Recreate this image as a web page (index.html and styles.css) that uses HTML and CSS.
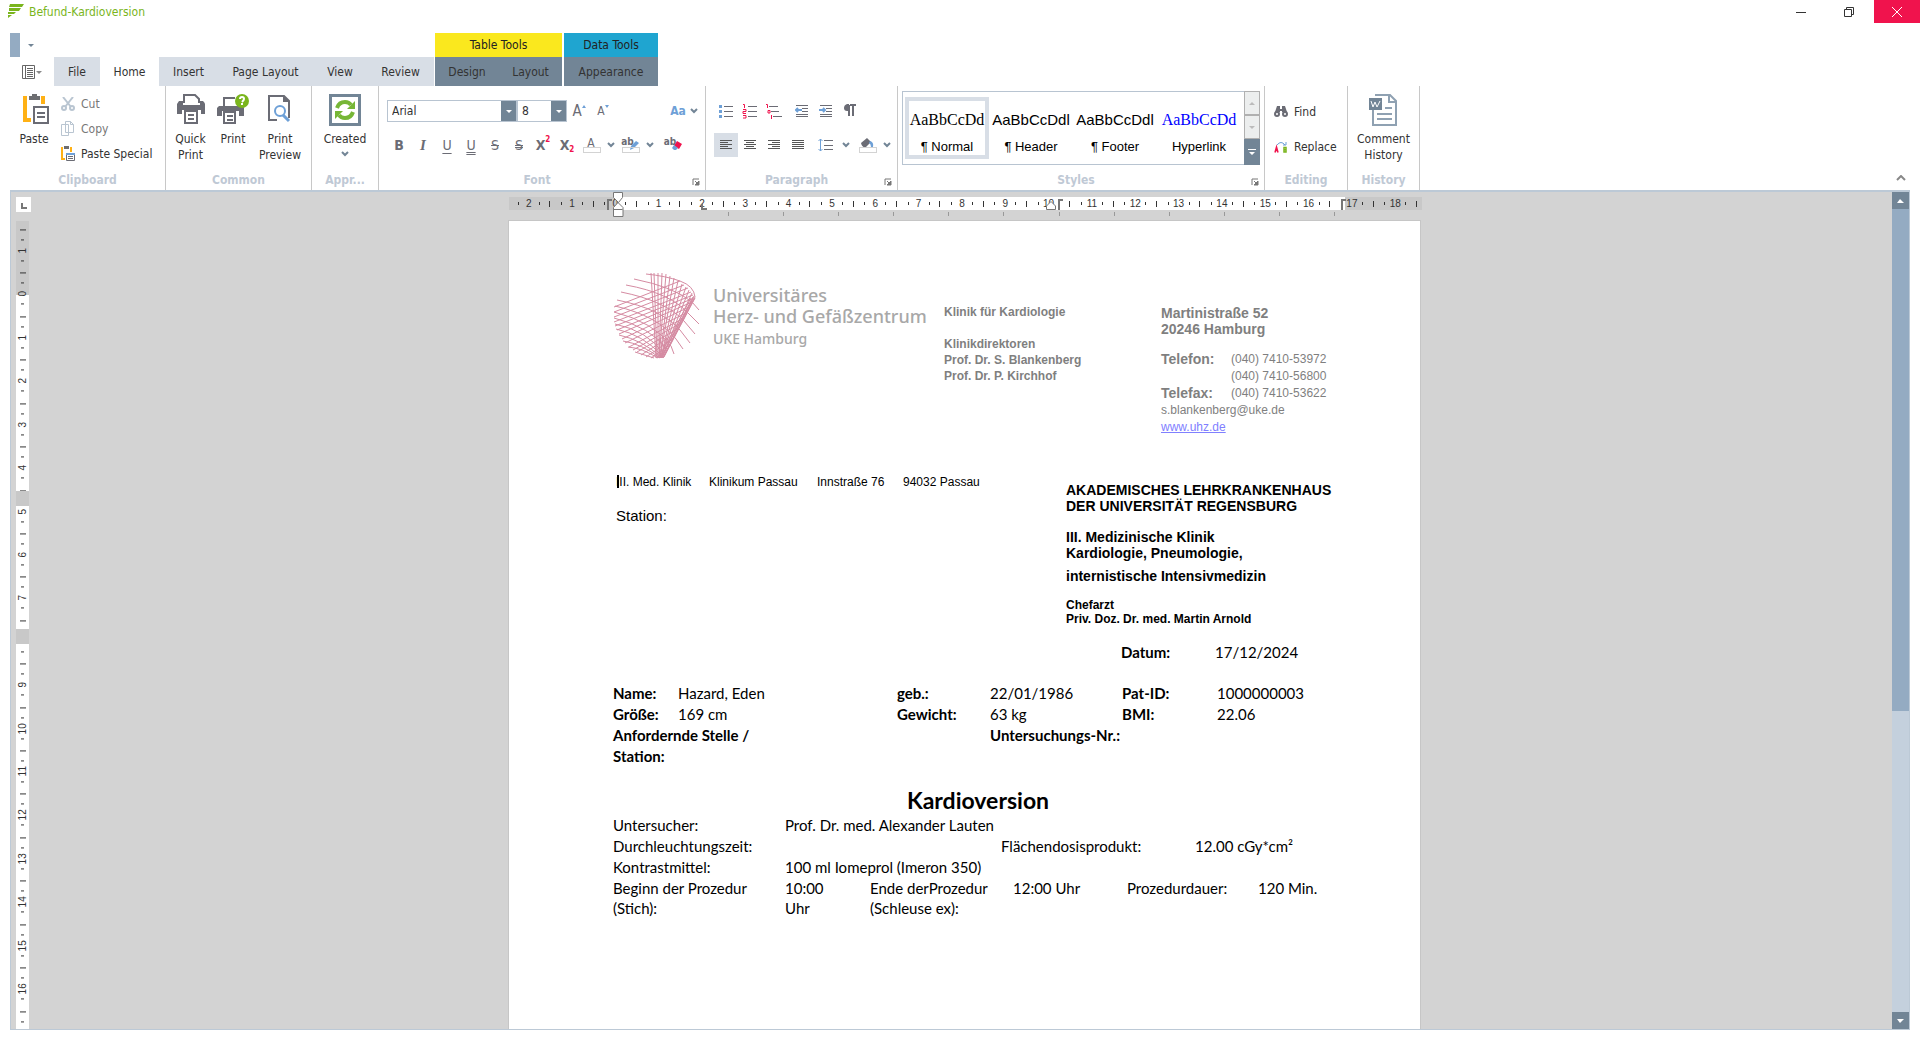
FILE: index.html
```html
<!DOCTYPE html>
<html lang="de">
<head>
<meta charset="utf-8">
<title>Befund-Kardioversion</title>
<link rel="stylesheet" href="styles.css">
</head>
<body>
<svg class="defs" aria-hidden="true">
  <symbol id="chev" viewBox="0 0 8 6"><path d="M1 1l3 3 3-3" fill="none" stroke="#728596" stroke-width="2"/></symbol>
  <symbol id="caret" viewBox="0 0 6 3"><path d="M0 0h6L3 3z" fill="currentColor"/></symbol>
  <symbol id="launch" viewBox="0 0 8 8"><path d="M1 7V1h6" fill="none" stroke="#777"/><path d="M7 3v4H3zM3 3l3 3" fill="#777" stroke="#777"/></symbol>
</svg>
<header class="titlebar">
  <svg class="app-logo" width="16" height="14" viewBox="0 0 16 14"><path d="M2 0h14l-2 3H1zM1 4h12l-2 3H1zM0 8h8l-2 2H0zM0 11h4l-4 3z" fill="#7ab51d"/></svg>
  <h1 class="title">Befund-Kardioversion</h1>
  <button class="win" aria-label="Minimize"><svg width="12" height="12"><path d="M1 6.500h10" stroke="#333"/></svg></button>
  <button class="win" aria-label="Restore"><svg width="12" height="12"><path d="M1.500 3.500h7v7h-7zM3.500 3V1.500h7v7H9" fill="none" stroke="#333"/></svg></button>
  <button class="win close" aria-label="Close"><svg width="12" height="12"><path d="M1 1l10 10M11 1L1 11" stroke="#fff"/></svg></button>
</header>

<div class="quick">
  <span class="quick-block"></span>
  <button class="quick-more" aria-label="Customize"><svg width="6" height="3"><use href="#caret"/></svg></button>
  <span class="context table-tools">Table Tools</span>
  <span class="context data-tools">Data Tools</span>
</div>

<nav class="tabs">
  <button class="menu" aria-label="Menu"><svg width="20" height="14" viewBox="0 0 20 14"><path d="M.5.5h12v13H.5zM3.500 0v14M5 3.500h6M5 5.500h6M5 7.500h6M5 9.500h6M5 11.500h6" fill="none" stroke="#666"/><path d="M14 6h6l-3 3z" fill="#888"/></svg></button>
  <button class="tab file">File</button>
  <button class="tab home">Home</button>
  <button class="tab insert">Insert</button>
  <button class="tab layout">Page Layout</button>
  <button class="tab view">View</button>
  <button class="tab review">Review</button>
  <button class="tab ctx design">Design</button>
  <button class="tab ctx tlayout">Layout</button>
  <button class="tab ctx appearance">Appearance</button>
</nav>

<section class="ribbon">
  <div class="group g-clip">
    <div class="area">
      <button class="big paste"><svg width="32" height="32" viewBox="0 0 32 32"><path d="M5 2h4v4v18h4v4H5zM23 2h4v8h-4z" fill="#ffb115"/><path d="M11 2h3V0h5v2h3v4H11z" fill="#6d6e71"/><path d="M16 13h14v16H16z" fill="#fff" stroke="#6b6c75" stroke-width="2"/><path d="M19 19h8M19 23h8" stroke="#6b6c75" stroke-width="2"/></svg>Paste</button>
      <div class="stack">
        <button class="small off"><svg width="14" height="14" viewBox="0 0 14 14" fill="none" stroke="#b9c5d1" stroke-width="2"><path d="M2 0l8 10M12 0L4 10"/><circle cx="3" cy="11" r="2"/><circle cx="11" cy="11" r="2"/></svg>Cut</button>
        <button class="small off"><svg width="14" height="16" viewBox="0 0 14 16" fill="#fff" stroke="#b9c5d1"><path d="M.5 3.500h7v11h-7zM4.500.5h5l3 3v8h-8zM9.500.5v3h3"/></svg>Copy</button>
        <button class="small"><svg width="14" height="16" viewBox="0 0 14 16"><path d="M0 1h2v11h2v2H0zM9 1h2v5H9z" fill="#ffb115"/><path d="M3 0h5v3H3z" fill="#6d6e71"/><path d="M5.500 7.500h8v7h-8z" fill="#fff" stroke="#6b6c75"/><path d="M5 7h9v2H5z" fill="#6ea0d7"/><path d="M7 10.500h5M7 12.500h5" stroke="#6b6c75"/></svg>Paste Special</button>
      </div>
    </div>
    <h2>Clipboard</h2>
  </div>
  <div class="group g-common">
    <div class="area">
      <button class="big quickp"><svg width="30" height="32" viewBox="0 0 30 32"><path d="M8 9V1h11l4 4v4" fill="none" stroke="#6b6c75" stroke-width="2"/><path d="M3 7h4v4h17V7h3q2 2 2 3v10h-4v-4H6v4H1V10z" fill="#6b6c75"/><path d="M9 17h12v12H9z" fill="#fff" stroke="#6b6c75" stroke-width="2"/><path d="M12 21h6M12 25h6" stroke="#6b6c75" stroke-width="2"/></svg>Quick<br>Print</button>
      <button class="big printb"><svg width="34" height="32" viewBox="0 0 34 32"><path d="M8 13V4h11" fill="none" stroke="#6b6c75" stroke-width="2"/><path d="M3 12h24q1 1 1 2v8h-5v-5H6v5H1v-8z" fill="#6b6c75"/><path d="M8 18h11v11H8z" fill="#fff" stroke="#6b6c75" stroke-width="2"/><path d="M11 22h6M11 26h6" stroke="#6b6c75" stroke-width="2"/><circle cx="26" cy="7" r="7" fill="#7ab51d"/><path d="M24 5q0-2 2-2t2 2q0 1-2 3M26 9v2" fill="none" stroke="#fff" stroke-width="2"/></svg>Print</button>
      <button class="big prevb"><svg width="30" height="32" viewBox="0 0 30 32"><path d="M12 26H4V2h15l5 5v17" fill="none" stroke="#6b6c75" stroke-width="2"/><path d="M18 1l7 7h-7z" fill="#6b6c75"/><circle cx="15" cy="17" r="5" fill="#fff" stroke="#6ea0d7" stroke-width="2"/><path d="M18 21l6 6" stroke="#6ea0d7" stroke-width="3"/></svg>Print<br>Preview</button>
    </div>
    <h2>Common</h2>
  </div>
  <div class="group g-appr">
    <div class="area">
      <button class="big created"><svg width="32" height="32" viewBox="0 0 32 32"><path d="M1.500 1.500h29v29h-29z" fill="#fff" stroke="#728596" stroke-width="3"/><path d="M8 14q2-6 8-6 4 0 6 3M24 18q-2 6-8 6-4 0-6-3" fill="none" stroke="#76b636" stroke-width="4"/><path d="M26 7v8h-8zM6 25v-8h8z" fill="#76b636"/></svg>Created<svg class="under" width="8" height="6"><use href="#chev"/></svg></button>
    </div>
    <h2>Appr...</h2>
  </div>
  <div class="group g-font">
    <div class="area rows">
      <div class="row">
        <label class="combo name"><select aria-label="Font"><option>Arial</option></select><span><svg width="6" height="3"><use href="#caret"/></svg></span></label>
        <label class="combo size"><select aria-label="Font size"><option>8</option></select><span><svg width="6" height="3"><use href="#caret"/></svg></span></label>
        <button class="tool" aria-label="Grow font"><b class="grow">A</b><svg class="mark" width="4" height="3"><path d="M0 3l2-3 2 3z" fill="#6ea0d7"/></svg></button>
        <button class="tool" aria-label="Shrink font"><b class="shrink">A</b><svg class="mark" width="4" height="3"><path d="M0 0h4L2 3z" fill="#6ea0d7"/></svg></button>
        <button class="tool case">Aa <svg width="8" height="6"><use href="#chev"/></svg></button>
      </div>
      <div class="row">
        <button class="tool b">B</button>
        <button class="tool i">I</button>
        <button class="tool u">U</button>
        <button class="tool uu">U</button>
        <button class="tool s">S</button>
        <button class="tool ss">S</button>
        <button class="tool x">X<sup>2</sup></button>
        <button class="tool x">X<sub>2</sub></button>
        <button class="tool bar">A</button>
        <button class="drop" aria-label="Font colour"><svg width="8" height="6"><use href="#chev"/></svg></button>
        <button class="tool bar hl">ab<svg width="9" height="9"><path d="M0 9l1-4 5-5 3 2-5 5z" fill="#6ea0d7"/></svg></button>
        <button class="drop" aria-label="Highlight"><svg width="8" height="6"><use href="#chev"/></svg></button>
        <button class="tool hl er">ab<svg width="10" height="9"><path d="M5 0l5 3-3 5-5-3z" fill="#f0134d"/><path d="M2 4l4 3-2 2H2L0 7z" fill="#6ea0d7"/></svg></button>
      </div>
    </div>
    <h2>Font</h2><button class="launch" aria-label="Font dialog"><svg width="8" height="8"><use href="#launch"/></svg></button>
  </div>
  <div class="group g-para">
    <div class="area rows">
      <div class="row">
        <button class="tool" aria-label="Bullets"><svg width="16" height="16"><path d="M6 3.500h9M6 8.500h9M6 13.500h9" stroke="#6b6c75"/><path d="M1 2h3v3H1zM1 7h3v3H1zM1 12h3v3H1z" fill="#6ea0d7"/></svg></button>
        <button class="tool" aria-label="Numbering"><svg width="16" height="16"><path d="M6 3.500h9M6 8.500h9M6 13.500h9" stroke="#6b6c75"/><path d="M1 1.500h1.500V5M1 6.500h3v2H1v2h3M1 12.500h3V15H1" fill="none" stroke="#f0134d"/></svg></button>
        <button class="tool gap" aria-label="Multilevel list"><svg width="16" height="16"><path d="M3 3.500h9M5 8.500h8M7 13.500h9" stroke="#6b6c75"/><path d="M0 1.500h1.500V5M2 7.500h2V10H2zM5.500 12v4" fill="none" stroke="#f0134d"/></svg></button>
        <button class="tool" aria-label="Decrease indent"><svg width="14" height="12"><path d="M1 .5h12M7 3.500h6M7 6.500h6M1 9.500h12M1 11.500h12" stroke="#6b6c75"/><path d="M1 5h6M3 3L1 5l2 2" fill="none" stroke="#6ea0d7" stroke-width="2"/></svg></button>
        <button class="tool" aria-label="Increase indent"><svg width="14" height="12"><path d="M1 .5h12M7 3.500h6M7 6.500h6M1 9.500h12M1 11.500h12" stroke="#6b6c75"/><path d="M0 5h6M4 3l2 2-2 2" fill="none" stroke="#6ea0d7" stroke-width="2"/></svg></button>
        <button class="tool" aria-label="Show marks"><svg width="14" height="14" viewBox="0 0 14 14"><path d="M7 1h6M6 1v11M10 1v11" stroke="#6b6c75" stroke-width="2"/><path d="M6 0v7H4Q1 7 1 4t3-4z" fill="#6b6c75"/></svg></button>
      </div>
      <div class="row">
        <button class="tool on" aria-label="Left"><svg width="12" height="12"><path d="M0 1.500h12M0 3.500h8M0 5.500h12M0 7.500h8M0 9.500h12" stroke="#555"/></svg></button>
        <button class="tool" aria-label="Center"><svg width="12" height="12"><path d="M0 1.500h12M2 3.500h8M0 5.500h12M2 7.500h8M0 9.500h12" stroke="#555"/></svg></button>
        <button class="tool" aria-label="Right"><svg width="12" height="12"><path d="M0 1.500h12M4 3.500h8M0 5.500h12M4 7.500h8M0 9.500h12" stroke="#555"/></svg></button>
        <button class="tool gap" aria-label="Justify"><svg width="12" height="12"><path d="M0 1.500h12M0 3.500h12M0 5.500h12M0 7.500h12M0 9.500h12" stroke="#555"/></svg></button>
        <button class="tool" aria-label="Line spacing"><svg width="16" height="14"><path d="M6 2.500h9M6 7.500h9M6 11.500h9" stroke="#6b6c75"/><path d="M2.500 1v12M.5 3l2-2 2 2M.5 11l2 2 2-2" fill="none" stroke="#6ea0d7"/></svg></button>
        <button class="drop" aria-label="Line spacing list"><svg width="8" height="6"><use href="#chev"/></svg></button>
        <button class="tool bar fill" aria-label="Shading"><svg width="14" height="11"><path d="M1 5l6-5 4 4-5 5q-4 1-5-4z" fill="#6b6c75"/><path d="M10 3q4 1 3 6h-2q0-3-2-4z" fill="#6ea0d7"/></svg></button>
        <button class="drop" aria-label="Shading list"><svg width="8" height="6"><use href="#chev"/></svg></button>
      </div>
    </div>
    <h2>Paragraph</h2><button class="launch" aria-label="Paragraph dialog"><svg width="8" height="8"><use href="#launch"/></svg></button>
  </div>
  <div class="group g-styles">
    <div class="area">
      <div class="gallery">
        <button class="style sel"><span class="sample serif">AaBbCcDd</span><span>¶ Normal</span></button>
        <button class="style"><span class="sample">AaBbCcDdl</span><span>¶ Header</span></button>
        <button class="style"><span class="sample">AaBbCcDdl</span><span>¶ Footer</span></button>
        <button class="style"><span class="sample serif link">AaBbCcDd</span><span>Hyperlink</span></button>
        <div class="spin">
          <button aria-label="Up"><svg width="6" height="3"><path d="M0 3h6L3 0z" fill="#bbb"/></svg></button>
          <button aria-label="Down"><svg width="6" height="3"><path d="M0 0h6L3 3z" fill="#bbb"/></svg></button>
          <button class="more" aria-label="More"><svg width="8" height="6"><path d="M0 0h8v1H0zM1 3h6L4 6z" fill="#fff"/></svg></button>
        </div>
      </div>
    </div>
    <h2>Styles</h2><button class="launch" aria-label="Styles dialog"><svg width="8" height="8"><use href="#launch"/></svg></button>
  </div>
  <div class="group g-edit">
    <div class="area">
      <button class="small"><svg width="14" height="12" viewBox="0 0 14 12"><path d="M3 0h3v3h2V0h3l2 6H8V5H6v1H1z" fill="#6b6c75"/><circle cx="3" cy="8" r="2" fill="#fff" stroke="#6b6c75" stroke-width="2"/><circle cx="11" cy="8" r="2" fill="#fff" stroke="#6b6c75" stroke-width="2"/></svg>Find</button>
      <button class="small"><svg width="14" height="12" viewBox="0 0 14 12"><path d="M3 4q4-5 8 0M12 1v3H9" fill="none" stroke="#6ea0d7"/><path d="M1 11.500L2.500 6 4 11.500M1 9.500h3" fill="none" stroke="#f0134d" stroke-width="1.500"/><path d="M10 6.500h2v4.500h-2zM10 8.700h2.500" fill="none" stroke="#7ab51d" stroke-width="1.500"/></svg>Replace</button>
    </div>
    <h2>Editing</h2>
  </div>
  <div class="group g-hist">
    <div class="area">
      <button class="big"><svg width="32" height="32" viewBox="0 0 32 32"><path d="M7 1h15l6 6v24H5V16" fill="#fff" stroke="#8fa1b2" stroke-width="2"/><path d="M21 1v7h7M17 14h7M9 20h15M9 25h15" fill="none" stroke="#8fa1b2" stroke-width="2"/><path d="M1 4h13v12H1z" fill="#728596"/><path d="M3 7l2 6 2-5 2 5 3-6" fill="none" stroke="#fff" stroke-width="1"/></svg>Comment<br>History</button>
    </div>
    <h2>History</h2>
  </div>
  <button class="collapse" aria-label="Collapse ribbon"><svg width="10" height="6"><path d="M1 5l4-4 4 4" fill="none" stroke="#888" stroke-width="2"/></svg></button>
</section>

<main class="workspace">
  <div class="side">
    <button class="tabkind" aria-label="Tab type"><svg width="6" height="6"><path d="M1 0v5h5" fill="none" stroke="#777" stroke-width="2"/></svg></button>
    <div class="vruler">
      <div class="vscale"><i>1</i><i>0</i><i>1</i><i>2</i><i>3</i><i>4</i><i>5</i><i>6</i><i>7</i><i></i><i>9</i><i>10</i><i>11</i><i>12</i><i>13</i><i>14</i><i>15</i><i>16</i><i></i></div>
      <span class="band first"></span><span class="band second"></span>
    </div>
  </div>
  <div class="canvas">
    <div class="hruler">
      <div class="hscale"><i>2</i><i>1</i><i>0</i><i>1</i><i>2</i><i>3</i><i>4</i><i>5</i><i>6</i><i>7</i><i>8</i><i>9</i><i>10</i><i>11</i><i>12</i><i>13</i><i>14</i><i>15</i><i>16</i><i>17</i><i>18</i></div>
      <svg class="m-col" width="5" height="11"><path d="M1 11V1h4" fill="none" stroke="#777" stroke-width="2"/></svg>
      <svg class="m-indent" width="11" height="26"><path d="M.5.5h9v5l-4 5-5-5zM5 10.500l5 5v9H.5v-9zM.5 17.500h9" fill="#fff" stroke="#777"/></svg>
      <svg class="m-tab" width="6" height="6"><path d="M1 0v5h5" fill="none" stroke="#777" stroke-width="2"/></svg>
      <svg class="m-right" width="11" height="9"><path d="M.5 8.500V5L5 .5 9.500 5v3.500z" fill="#fff" stroke="#777"/></svg>
      <svg class="m-col two" width="5" height="11"><path d="M1 11V1h4" fill="none" stroke="#777" stroke-width="2"/></svg>
      <svg class="m-col three" width="5" height="11"><path d="M1 11V1h4" fill="none" stroke="#777" stroke-width="2"/></svg>
    </div>
    <div class="stops"><i></i><i></i><i></i><i></i><i></i><i></i><i></i><i></i><i></i><i></i><i></i><i></i></div>
    <article class="page">
      <header class="letterhead">
        <svg class="emblem" width="86" height="86" viewBox="0 0 86 86" fill="none" stroke="#d58ba2" stroke-width="1">
          <path d="M37 0L42 85M40 0L43 85M44 0L44 85M48 0L45 85M52 1L45 85M56 3L46 85M60 5L46 85M64 8L47 85M68 11L47 85M72 14L47 85M75 17L48 85M78 20L48 85M80 23L49 85M81 24L49 85M81 25L50 84M80 26L50 83M79 26L47 84M77 25L46 83M79 24L48 83"/>
          <path d="M32 1Q52 3 66 8T81 24M20 6Q60 14 78 29L85 37M12 12Q56 20 74 40L85 51M7 19Q52 28 70 48L81 61M3 27Q48 36 66 57L76 70M1 33Q44 43 62 66L69 76M0 39Q40 49 57 73L60 81M0 45Q36 54 53 76M1 51Q34 58 50 81M2 56Q30 62 48 83M5 62Q28 67 47 84M9 68Q28 71 46 85M14 74Q28 75 44 85M21 79L40 85"/>
          <path d="M0 34L66 8M0 39L70 12M0 44L74 15M0 49L77 19M1 53L79 22M3 57L80 25M5 61L78 29M8 66L75 34M11 70L72 40M15 74L70 45M19 77L67 50M23 79L65 55M27 82L62 60M32 84L60 65M37 85L57 71M42 85L54 76"/>
        </svg>
        <p class="brand">Universitäres<br>Herz- und Gefäßzentrum<br><small>UKE Hamburg</small></p>
        <div class="clinic"><p>Klinik für Kardiologie</p><p>Klinikdirektoren<br>Prof. Dr. S. Blankenberg<br>Prof. Dr. P. Kirchhof</p></div>
        <div class="contact">
          <p class="street">Martinistraße 52<br>20246 Hamburg</p>
          <table><tr><th>Telefon:</th><td>(040) 7410-53972</td></tr><tr><th></th><td>(040) 7410-56800</td></tr><tr><th>Telefax:</th><td>(040) 7410-53622</td></tr></table>
          <p class="web">s.blankenberg@uke.de<br><a href="#">www.uhz.de</a></p>
        </div>
      </header>
      <section class="sender">
        <div class="from">
          <p class="line"><span class="c1">III. Med. Klinik</span><span class="c2">Klinikum Passau</span><span class="c3">Innstraße 76</span><span>94032 Passau</span></p>
          <p class="station">Station:</p>
        </div>
        <div class="hospital">
          <p>AKADEMISCHES LEHRKRANKENHAUS<br>DER UNIVERSITÄT REGENSBURG</p>
          <p>III. Medizinische Klinik<br>Kardiologie, Pneumologie,</p>
          <p class="icu">internistische Intensivmedizin</p>
          <p class="chief">Chefarzt<br>Priv. Doz. Dr. med. Martin Arnold</p>
        </div>
      </section>
      <p class="date"><b>Datum:</b><span>17/12/2024</span></p>
      <table class="patient">
        <colgroup><col class="p1"><col class="p2"><col class="p3"><col class="p4"><col class="p5"><col></colgroup>
        <tr><th>Name:</th><td>Hazard, Eden</td><th>geb.:</th><td>22/01/1986</td><th>Pat-ID:</th><td>1000000003</td></tr>
        <tr><th>Größe:</th><td>169 cm</td><th>Gewicht:</th><td>63 kg</td><th>BMI:</th><td>22.06</td></tr>
        <tr><th colspan="2">Anfordernde Stelle /<br>Station:</th><td></td><th colspan="3">Untersuchungs-Nr.:</th></tr>
      </table>
      <h2 class="report">Kardioversion</h2>
      <table class="exam">
        <colgroup><col class="e1"><col class="e2"><col class="e3"><col></colgroup>
        <tr><td>Untersucher:</td><td>Prof. Dr. med. Alexander Lauten</td><td></td><td></td></tr>
        <tr><td>Durchleuchtungszeit:</td><td></td><td>Flächendosisprodukt:</td><td>12.00 cGy*cm²</td></tr>
        <tr><td>Kontrastmittel:</td><td colspan="3">100 ml Iomeprol (Imeron 350)</td></tr>
      </table>
      <table class="times">
        <colgroup><col class="t1"><col class="t2"><col class="t3"><col class="t4"><col class="t5"><col></colgroup>
        <tr><td>Beginn der Prozedur<br>(Stich):</td><td>10:00<br>Uhr</td><td>Ende derProzedur<br>(Schleuse ex):</td><td>12:00 Uhr</td><td>Prozedurdauer:</td><td>120 Min.</td></tr>
      </table>
    </article>
  </div>
  <div class="scroll">
    <button aria-label="Scroll up"><svg width="7" height="4"><path d="M0 4h7L3 0z" fill="#fff"/></svg></button>
    <div class="thumb"></div><div class="track"></div>
    <button aria-label="Scroll down"><svg width="7" height="4"><path d="M0 0h7L3 4z" fill="#fff"/></svg></button>
  </div>
</main>
</body>
</html>
```
FILE: styles.css
```css
* { box-sizing: border-box; }
body { margin: 0; height: 100vh; display: flex; flex-direction: column; background: #fff; color: #333; overflow: hidden;
  font: 12px/16px "DejaVu Sans Condensed", "Noto Sans", sans-serif; }
p, h1, h2 { margin: 0; }
i { font-style: normal; }
button { margin: 0; padding: 0; border: 0; background: none; color: inherit; font: inherit; }
svg { display: block; flex: none; }
.defs { position: absolute; width: 0; height: 0; }

/* title bar */
.titlebar { display: flex; height: 33px; align-items: flex-start; }
.app-logo { margin: 4px 5px 0 8px; }
.title { flex: 1; font-size: 12px; font-weight: 400; line-height: 24px; color: #7ab51d; }
.win { width: 46px; height: 23px; margin-left: 2px; display: flex; align-items: center; justify-content: center; }
.close { background: #f0134d; }

/* quick access and contextual headings */
.quick { display: flex; height: 24px; flex: none; padding-left: 10px; }
.quick-block { width: 10px; background: #94abc2; }
.quick-more { width: 22px; display: flex; align-items: center; justify-content: center; color: #728596; }
.context { display: flex; align-items: center; justify-content: center; color: #222; }
.table-tools { width: 127px; margin-left: 393px; background: #fae81e; }
.data-tools { width: 94px; margin-left: 2px; background: #1fa5d0; }

/* tabs */
.tabs { display: flex; height: 29px; flex: none; }
.menu { width: 54px; padding: 0 12px 0 22px; }
.tab { background: #d8dee6; }
.file { width: 46px; }
.home { width: 59px; background: #fff; }
.insert { width: 59px; }
.layout { width: 95px; }
.view { width: 54px; }
.review { width: 67px; margin-right: 1px; }
.ctx { background: #728596; }
.design { width: 64px; }
.tlayout { width: 63px; margin-right: 2px; }
.appearance { width: 94px; }

/* ribbon */
.ribbon { display: flex; height: 104px; flex: none; padding-left: 10px; }
.group { flex: none; display: grid; grid-template: 84px 20px / 1fr; border-right: 1px solid #c8c8c8; position: relative; }
.group h2 { font-size: 12px; line-height: 21px; text-align: center; color: #bfc9d5; }
.group:has(.launch) h2 { padding-right: 10px; }
.area { display: flex; min-width: 0; }
.g-clip { width: 156px; }
.g-common { width: 146px; }
.g-appr { width: 67px; }
.g-font { width: 327px; }
.g-para { width: 192px; }
.g-styles { width: 367px; }
.g-edit { width: 83px; }
.g-hist { width: 72px; }
.big { padding-top: 8px; display: block; text-align: center; align-self: flex-start; }
.big svg { margin: 0 auto 5px; }
.big .under { margin: 4px auto 0; }
.paste { width: 48px; }
.stack { padding-top: 5px; }
.small { display: flex; align-items: center; gap: 6px; height: 25px; white-space: nowrap; }
.stack .small { margin-left: 3px; }
.off { color: #777; }
.quickp { width: 49px; }
.printb { width: 36px; }
.prevb { width: 58px; }
.created, .g-hist .big { width: 100%; }
.rows { flex-direction: column; padding: 13px 0 0 8px; gap: 10px; }
.row { display: flex; height: 24px; align-items: center; }
.combo { position: relative; display: flex; flex: none; height: 22px; border: 1px solid #b8c4d1; }
.combo select { appearance: none; width: 100%; border: 0; padding: 0 4px; background: #fff; color: #333; font: inherit; }
.combo span { position: absolute; right: 0; top: 0; bottom: 0; width: 15px; display: flex; align-items: center; justify-content: center; background: #728596; color: #fff; pointer-events: none; }
.name { width: 130px; }
.size { width: 50px; }
.tool { width: 24px; height: 24px; display: flex; align-items: center; justify-content: center; color: #6b6c75; font-size: 14px; flex: none; position: relative; }
.mark { margin-bottom: 10px; }
.grow { font-size: 15px; font-weight: 400; }
.shrink { font-size: 12px; font-weight: 400; }
.case { width: 30px; margin-left: 54px; gap: 4px; color: #6ea0d7; font-size: 12px; font-weight: 700; }
.b, .x { font-weight: 700; }
.i { font: italic 700 15px "Liberation Serif", serif; }
.u { text-decoration: underline; text-underline-offset: 3px; }
.uu { text-decoration: underline double; text-underline-offset: 2px; }
.s { text-decoration: line-through; }
.ss { text-decoration: line-through double; }
.x sup, .x sub { font-size: 8px; line-height: 8px; color: #f0134d; }
.x sup { margin-bottom: 10px; }
.x sub { margin-top: 10px; }
.bar { font-size: 12px; padding-bottom: 4px; }
.bar::after { content: ""; position: absolute; left: 4px; bottom: 4px; width: 16px; height: 4px; border: 1px solid #d3d3d3; }
.hl { font-size: 10px; font-weight: 700; padding-bottom: 6px; }
.hl svg { margin: 6px 0 0 -4px; }
.drop { width: 15px; height: 24px; display: flex; align-items: center; justify-content: center; }
.er { margin-left: 4px; }
.fill { margin-left: 2px; }
.gap { margin-right: 4px; }
.on { background: #d8dee6; }
.launch { position: absolute; right: 5px; bottom: 4px; }
.gallery { display: flex; width: 358px; height: 74px; margin: 5px 0 0 4px; border: 1px solid #b8c4d1; padding: 0 0 0 2px; }
.style { width: 84px; height: 62px; margin-top: 5px; border: 4px solid transparent; border-width: 4px 2px; color: #000; font: 13px/16px "Liberation Sans", sans-serif; flex: none; }
.sel { border-width: 4px; border-color: #d8dee6; }
.style span { display: block; white-space: nowrap; }
.style .sample { font-size: 15px; line-height: 20px; margin: 9px 0 9px; }
.style .serif { font: 16px/20px "Liberation Serif", serif; }
.style .link { color: #00f; }
.spin { width: 16px; margin: -1px -1px -1px auto; display: grid; grid-template-rows: 24px 24px 26px; }
.spin button { display: flex; align-items: center; justify-content: center; border: 1px solid #b0b0b0; background: #eceeee; }
.spin .more { background: #728596; border: 0; }
.g-edit .area { flex-direction: column; gap: 10px; padding: 13px 0 0 9px; }
.collapse { margin: 89px 14px 0 auto; align-self: flex-start; }

/* workspace */
.workspace { flex: 1; min-height: 0; margin: 0 10px 10px; display: grid; grid-template-columns: 26px 1fr 17px; background: #d3d3d3; border: 1px solid #bcc9d6; border-top-width: 2px; }
.side { padding: 5px 0 0 5px; min-height: 0; display: flex; flex-direction: column; }
.tabkind { width: 15px; height: 15px; flex: none; padding: 6px 5px; background: #fff; }
.vruler { width: 13px; flex: 1; min-height: 0; margin-top: 9px; overflow: hidden; position: relative; background: linear-gradient(#c8c8c8 74px, #fff 74px); padding-top: 8px; }
.vscale { height: 825px; display: flex; flex-direction: column; color: #333; font: 10px/13px "Liberation Sans", sans-serif; }
.vscale i { flex: 1; writing-mode: vertical-rl; transform: rotate(180deg); text-align: center; width: 13px;
  background: linear-gradient(#333, #333) 5px 25% / 3px 1px no-repeat, linear-gradient(#333, #333) 5px 75% / 3px 1px no-repeat, linear-gradient(#333, #333) 3px 100% / 6px 1px no-repeat; }
.band { position: absolute; left: 0; width: 13px; height: 15px; background: #c8c8c8; }
.first { top: 270px; }
.second { top: 408px; }
.canvas { padding-top: 5px; min-width: 0; min-height: 0; display: flex; flex-direction: column; align-items: center; overflow: hidden; }
.hruler { width: 913px; height: 13px; margin-left: 2px; flex: none; position: relative; padding-right: 5px; background: linear-gradient(90deg, #c8c8c8 109px, #fff 109px, #fff 836px, #c8c8c8 836px); }
.hscale { display: flex; height: 13px; margin-left: -2px; color: #333; font: 10px/13px "Liberation Sans", sans-serif; }
.hscale i { flex: 1; text-align: center;
  background: linear-gradient(#333, #333) 25% 5px / 1px 3px no-repeat, linear-gradient(#333, #333) 75% 5px / 1px 3px no-repeat, linear-gradient(#333, #333) 100% 4px / 1px 6px no-repeat; }
.hruler svg { position: absolute; }
.m-col { left: 98px; top: 2px; }
.two { left: 549px; }
.three { left: 832px; }
.m-indent { left: 104px; top: -5px; }
.m-tab { left: 192px; top: 7px; }
.m-right { left: 537px; top: 4px; }
.stops { width: 608px; height: 4px; margin: 2px 0 4px 134px; flex: none; display: flex; justify-content: space-between; }
.stops i { width: 1px; background: #999; }
.scroll { display: flex; flex-direction: column; background: #c4d0dd; }
.scroll button { height: 17px; flex: none; display: flex; align-items: center; justify-content: center; background: #728596; }
.thumb { flex: 5; background: #94abc2; }
.track { flex: 3; }

/* document */
.page { width: 913px; flex: 1; min-height: 0; background: #fff; border: 1px solid #c6c6c6; border-bottom: 0; padding: 52px 0 0 105px; color: #000; font: 15px/21px Lato, sans-serif; overflow: hidden; }
.letterhead { display: grid; grid-template-columns: 99px 231px 217px 1fr; height: 201px; color: #7f7f7f; font: 12px/16px "Liberation Sans", sans-serif; }
.brand { padding-top: 12px; font: 500 18px/21px "Noto Sans", sans-serif; color: #a8a8a8; white-space: nowrap; }
.brand small { font-size: 14px; }
.clinic { padding-top: 31px; font-weight: 700; }
.clinic p { margin-bottom: 16px; }
.contact { padding-top: 32px; }
.street { font-size: 14px; font-weight: 700; margin-bottom: 14px; }
.contact table { border-collapse: collapse; line-height: 17px; }
.contact th { width: 70px; padding: 0; text-align: left; font-size: 14px; }
.contact td { padding: 0; }
.web { line-height: 17px; }
.web a { color: #8080ff; }
.sender { display: grid; grid-template-columns: 452px 1fr; font: 12px/16px "Liberation Sans", sans-serif; }
.line { position: relative; display: flex; padding: 0 0 0 2px; white-space: nowrap; }
.line::before { content: ""; position: absolute; left: 3px; top: 1px; width: 2px; height: 13px; background: #000; }
.c1 { width: 93px; }
.c2 { width: 108px; }
.c3 { width: 86px; }
.station { font-size: 15px; margin: 18px 0 0 2px; }
.hospital { padding-top: 8px; font-size: 14px; font-weight: 700; white-space: nowrap; }
.hospital p { margin-bottom: 15px; }
.hospital .icu { margin: -8px 0 14px; }
.hospital .chief { font-size: 12px; line-height: 14px; margin: 0; }
.date { display: flex; margin: 16px 0 20px 507px; }
.date b { width: 94px; }
.patient, .exam, .times { table-layout: fixed; border-collapse: collapse; width: 760px; margin-left: -1px; }
.page th, .page td { padding: 0; text-align: left; vertical-align: top; white-space: nowrap; }
.p1 { width: 65px; }
.p2 { width: 219px; }
.p3 { width: 93px; }
.p4 { width: 132px; }
.p5 { width: 95px; }
.report { width: 728px; margin: 18px 0 0; text-align: center; font-size: 23px; line-height: 30px; }
.exam, .times { line-height: 20px; }
.exam td { height: 21px; }
.e1 { width: 172px; }
.e2 { width: 216px; }
.e3 { width: 194px; }
.t1 { width: 172px; }
.t2 { width: 85px; }
.t3 { width: 143px; }
.t4 { width: 114px; }
.t5 { width: 131px; }
```
